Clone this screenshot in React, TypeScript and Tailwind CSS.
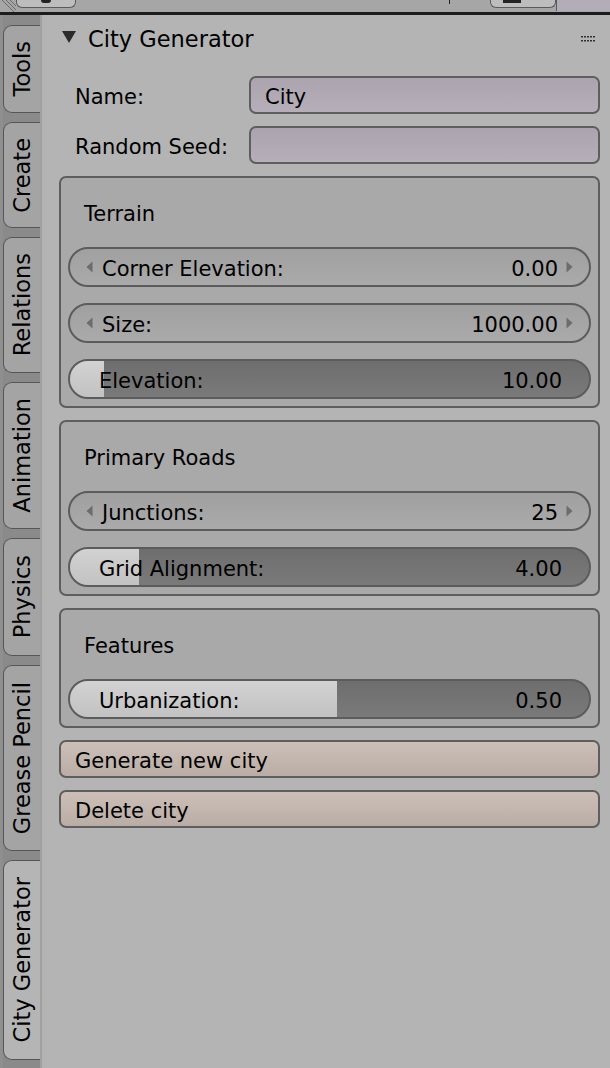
import type { ReactNode } from 'react';

const FONT = { fontFamily: '"DejaVu Sans", "Liberation Sans", sans-serif' };

const TABS = [
  { label: 'Tools', h: 88 },
  { label: 'Create', h: 106 },
  { label: 'Relations', h: 136 },
  { label: 'Animation', h: 147 },
  { label: 'Physics', h: 118 },
  { label: 'Grease Pencil', h: 186 },
  { label: 'City Generator', h: 200, active: true },
];

function Tab({ label, h, active }: { label: string; h: number; active?: boolean }) {
  return (
    <div
      style={{ height: h }}
      className={`flex items-center justify-center rounded-l-[9px] border-[1.5px] border-r-0 border-[#565656] ${active ? 'bg-[#b5b5b5]' : 'bg-[#a4a4a4]'}`}
    >
      <span className="[writing-mode:vertical-rl] rotate-180 text-[22.5px] leading-none text-black whitespace-nowrap">{label}</span>
    </div>
  );
}

function Arrow({ dir }: { dir: 'l' | 'r' }) {
  return (
    <svg width="7" height="12" viewBox="0 0 7 12" className="shrink-0">
      {dir === 'l' ? <path d="M6.5 0.5 L0.5 6 L6.5 11.5 Z" fill="#6c6c6c" /> : <path d="M0.5 0.5 L6.5 6 L0.5 11.5 Z" fill="#6c6c6c" />}
    </svg>
  );
}

function NumField({ label, value }: { label: string; value: string }) {
  return (
    <div className="h-[40px] rounded-full border-2 border-[#5c5c5c] bg-gradient-to-b from-[#a0a0a0] to-[#aaaaaa] flex items-center pl-[16px] pr-[16px]">
      <Arrow dir="l" />
      <span className="ml-[9px] pt-[5px] text-[21px] text-black">{label}</span>
      <span className="ml-auto pt-[5px] text-[21px] text-black">{value}</span>
      <span className="ml-[8px]"><Arrow dir="r" /></span>
    </div>
  );
}

function Slider({ label, value, fill }: { label: string; value: string; fill: number }) {
  return (
    <div className="relative h-[40px] rounded-full border-2 border-[#5c5c5c] bg-gradient-to-b from-[#6e6e6e] to-[#7a7a7a] overflow-hidden flex items-center pl-[29px] pr-[27px]">
      <div style={{ width: fill }} className="absolute left-0 top-0 bottom-0 bg-gradient-to-b from-[#d2d2d2] to-[#c2c2c2]" />
      <span className="relative pt-[5px] text-[21px] text-black">{label}</span>
      <span className="relative ml-auto pt-[5px] text-[21px] text-black">{value}</span>
    </div>
  );
}

function Box({ title, children }: { title: string; children: ReactNode }) {
  return (
    <div className="mt-[12px] rounded-[7px] border-2 border-[#5e5e5e] bg-[#a9a9a9] pt-[15px] pb-[7px] px-[7px]">
      <div className="h-[40px] flex items-center pl-[16px] pt-[4px] text-[21px] text-black">{title}</div>
      <div className="mt-[14px] flex flex-col gap-[16px]">{children}</div>
    </div>
  );
}

function TextRow({ label, value }: { label: string; value?: string }) {
  return (
    <div className="flex items-center h-[38px]">
      <span className="w-[190px] pl-[16px] pt-[5px] text-[21px] text-black">{label}</span>
      <div className="flex-1 h-[38px] rounded-[7px] border-2 border-[#5e5e5e] bg-gradient-to-b from-[#aba4af] to-[#b6afba] flex items-center pl-[14px] pt-[5px] text-[21px] text-black">
        {value}
      </div>
    </div>
  );
}

function Button({ label }: { label: string }) {
  return (
    <div className="mt-[12px] h-[38px] rounded-[7px] border-2 border-[#5e5e5e] bg-gradient-to-b from-[#cbbfb7] to-[#b9ada5] flex items-center pl-[14px] pt-[5px] text-[21px] text-black">
      {label}
    </div>
  );
}

export default function App() {
  return (
    <div style={FONT} className="w-[610px] h-[1068px] bg-[#b4b4b4] overflow-hidden flex flex-col">
      {/* top strip of the area above */}
      <div className="h-[12px] bg-[#a6a6a6] flex items-start shrink-0">
        <svg width="16" height="12" viewBox="0 0 16 12" className="shrink-0">
          <path d="M2 0 L14 12 M6 0 L16 10 M10 0 L16 6" stroke="#6a6a6a" strokeWidth="1" />
        </svg>
        <div className="w-[60px] h-[8px] rounded-b-[6px] border border-t-0 border-[#5a5a5a] bg-[#bdbdbd] flex justify-center">
          <div className="w-[10px] h-[3px] rounded-b-full bg-[#222]" />
        </div>
        <div className="ml-[373px] w-[1px] h-[4px] bg-[#222]" />
        <div className="ml-[40px] w-[66px] h-[8px] rounded-b-[6px] border border-t-0 border-[#5a5a5a] bg-[#bdbdbd] flex pl-[12px]">
          <div className="w-[18px] h-[3px] bg-[#222]" />
        </div>
        <div className="flex-1 h-[11px] border-l border-[#5a5a5a] bg-[#b3adb8]" />
      </div>
      <div className="h-[3px] bg-[#1c1c1c] shrink-0" />

      <div className="flex flex-1 min-h-0">
        {/* viewport sliver */}
        <div className="w-[3px] bg-[#8f8f8f]" />
        {/* tabs */}
        <div className="w-[37px] bg-[#8a8a8a] pt-[10px] flex flex-col gap-[9px]">
          {TABS.map(t => <Tab key={t.label} {...t} />)}
        </div>
        <div className="w-[2px] bg-[#a2a2a2]" />

        {/* panel */}
        <div className="flex-1 pl-[17px] pr-[10px]">
          <div className="h-[46px] flex items-center pt-[4px]">
            <svg width="14" height="12" viewBox="0 0 14 12" className="ml-[3px] mt-[-6px]">
              <path d="M0 0 L14 0 L7 12 Z" fill="#2b2b2b" />
            </svg>
            <span className="ml-[12px] text-[22.5px] text-black">City Generator</span>
            <svg width="15" height="6" viewBox="0 0 15 6" className="ml-auto mr-[4px] mt-[-2px]">
              {[0, 3, 6, 9, 12].map(x => (
                <g key={x}>
                  <rect x={x} y={0} width="2" height="1.5" fill="#333" />
                  <rect x={x} y={4} width="2" height="1.5" fill="#333" />
                </g>
              ))}
            </svg>
          </div>

          <div className="mt-[15px] flex flex-col gap-[12px]">
            <TextRow label="Name:" value="City" />
            <TextRow label="Random Seed:" />
          </div>

          <Box title="Terrain">
            <NumField label="Corner Elevation:" value="0.00" />
            <NumField label="Size:" value="1000.00" />
            <Slider label="Elevation:" value="10.00" fill={34} />
          </Box>

          <Box title="Primary Roads">
            <NumField label="Junctions:" value="25" />
            <Slider label="Grid Alignment:" value="4.00" fill={69} />
          </Box>

          <Box title="Features">
            <Slider label="Urbanization:" value="0.50" fill={267} />
          </Box>

          <Button label="Generate new city" />
          <Button label="Delete city" />
        </div>
      </div>
    </div>
  );
}
